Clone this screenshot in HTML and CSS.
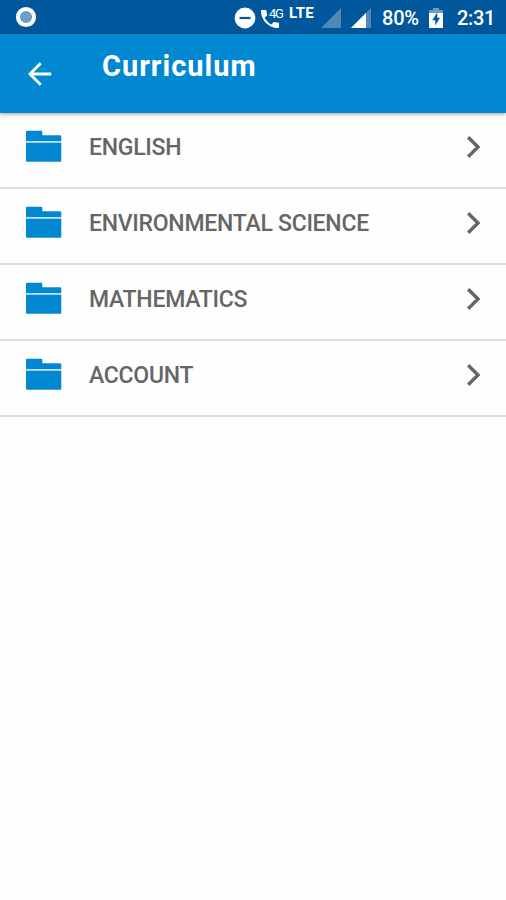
FILE: index.html
```html
<!DOCTYPE html>
<html lang="en">
<head>
<meta charset="utf-8">
<title>Curriculum</title>
<link rel="stylesheet" href="styles.css">
</head>
<body>
<svg class="defs" aria-hidden="true">
  <symbol id="folder" viewBox="0 0 36 32">
    <path d="M1 0.7H15Q16.3 0.7 16.3 2V5.3H34Q35.3 5.3 35.3 6.6V11H0V1.7Q0 .7 1 .7Z"/>
    <path d="M0 12.8H35.3V30.5Q35.3 31.7 34 31.7H1.3Q0 31.7 0 30.5Z"/>
    <path d="M0 11H35.3V12.8H0Z" opacity=".25"/>
  </symbol>
  <symbol id="chevron" viewBox="0 0 16 24">
    <path d="M2.2 2.2 12 12 2.2 21.8" fill="none" stroke="currentColor" stroke-width="3.4"/>
  </symbol>
</svg>
<div class="status">
  <svg class="record" viewBox="0 0 22 22"><circle cx="11" cy="11" r="8.1" fill="#6b9fc7" stroke="#fff" stroke-width="4"/></svg>
  <svg class="dnd" viewBox="0 0 22 22"><circle cx="11" cy="11" r="10.4" fill="#fff"/><path d="M5.5 11h11" stroke="#01579b" stroke-width="2.2"/></svg>
  <div class="call">
    <svg viewBox="0 0 18 18"><path d="M3.6 7.8c1.5 2.9 3.8 5.2 6.7 6.6l2.2-2.2c.3-.3.7-.4 1-.2 1.1.4 2.3.6 3.5.6.6 0 1 .4 1 1V17c0 .6-.4 1-1 1C7.600 18 0 10.400 0 1c0-.6.400-1 1-1h3.500c.6 0 1 .4 1 1 0 1.200.2 2.400.6 3.600.1.300 0 .7-.2 1Z"/></svg>
    <span>4G</span>
  </div>
  <span class="lte">LTE</span>
  <svg class="signal weak" viewBox="0 0 20 20"><path d="M20 0V20H0Z"/></svg>
  <svg class="signal strong" viewBox="0 0 20 20"><path class="empty" d="M20 0V20H0Z"/><path d="M15 5V20H0Z"/></svg>
  <span class="percent">80%</span>
  <svg class="battery" viewBox="0 0 14 20"><path d="M4 0H10V2H13Q14 2 14 3V5H0V3Q0 2 1 2H4Z" fill="#6b9fc7"/><path d="M0 5H14V19Q14 20 13 20H1Q0 20 0 19Z" fill="#fff"/><path d="M8.300 4.500 3.200 12.300H6.300V17.500L11 9.700H8.300Z" fill="#01579b"/></svg>
  <span class="time">2:31</span>
</div>
<header class="bar">
  <svg class="back" viewBox="0 0 24 24"><path d="M23.200 12H2M12.700 1.300 2 12 12.700 22.700" fill="none" stroke="#fff" stroke-width="2.800"/></svg>
  <h1>Curriculum</h1>
</header>
<main>
  <div class="row"><svg class="folder"><use href="#folder"/></svg><span>ENGLISH</span><svg class="chevron"><use href="#chevron"/></svg></div>
  <div class="row"><svg class="folder"><use href="#folder"/></svg><span>ENVIRONMENTAL SCIENCE</span><svg class="chevron"><use href="#chevron"/></svg></div>
  <div class="row"><svg class="folder"><use href="#folder"/></svg><span>MATHEMATICS</span><svg class="chevron"><use href="#chevron"/></svg></div>
  <div class="row"><svg class="folder"><use href="#folder"/></svg><span>ACCOUNT</span><svg class="chevron"><use href="#chevron"/></svg></div>
</main>
</body>
</html>
```
FILE: styles.css
```css
* { box-sizing: border-box; }
body { margin: 0; height: 900px; background: #fefefe; font-family: Roboto, "Liberation Sans", sans-serif; overflow: hidden; }
svg { display: block; flex: none; }
.defs { position: absolute; width: 0; height: 0; }
.status { height: 34px; background: #01579b; color: #fff; display: flex; align-items: flex-start; font-weight: 500; white-space: nowrap; }
.record { width: 22px; height: 22px; margin: 6px 0 0 15px; }
.dnd { width: 22px; height: 22px; margin: 7px 0 0 197px; }
.call { position: relative; width: 24px; height: 34px; margin-left: 4px; }
.call svg { width: 18px; height: 18px; margin: 10px 0 0 1px; fill: #fff; }
.call span { position: absolute; left: 9px; top: 6px; font-size: 13px; line-height: 15px; font-weight: 400; letter-spacing: -1.2px; }
.lte { width: 26px; margin: 5px 0 0 5px; font-size: 15px; line-height: 17px; font-weight: 700; letter-spacing: 0.3px; }
.signal { width: 20px; height: 20px; margin-top: 8px; fill: #fff; }
.weak { margin-left: 6px; fill: #5288b7; }
.strong { margin-left: 10px; }
.empty { fill: #5288b7; }
.percent { width: 38px; margin: 6px 0 0 11px; font-size: 20px; line-height: 24px; letter-spacing: -0.2px; }
.battery { width: 14px; height: 20px; margin: 8px 0 0 9px; }
.time { margin: 6px 0 0 14px; font-size: 20px; line-height: 24px; letter-spacing: -0.3px; }
.bar { position: relative; height: 79px; background: #0288d1; display: flex; align-items: flex-start; box-shadow: 0 1px 4px rgba(0, 0, 0, .4); }
.back { width: 24px; height: 24px; margin: 28px 0 0 28px; }
h1 { margin: 15px 0 0 50px; color: #fff; font-size: 29px; line-height: 34px; font-weight: 700; letter-spacing: 1px; }
.row { height: 76px; display: flex; align-items: flex-start; border-bottom: 2px solid #dedede; color: #666; }
.folder { width: 36px; height: 32px; margin: 17px 0 0 26px; fill: #0288d1; }
.row span { flex: 1; margin: 21px 0 0 27px; font-size: 23px; line-height: 28px; font-weight: 500; letter-spacing: -0.27px; white-space: nowrap; }
.chevron { width: 16px; height: 24px; margin: 22px 24px 0 0; }
```
